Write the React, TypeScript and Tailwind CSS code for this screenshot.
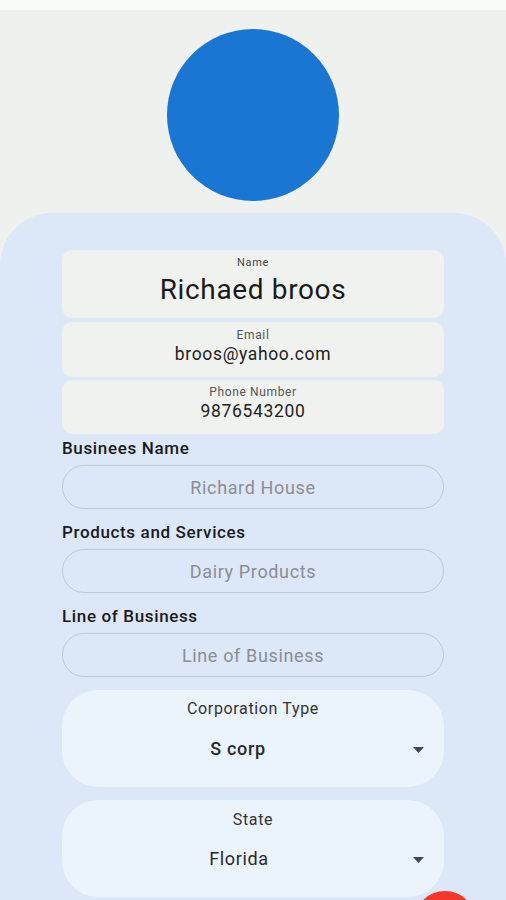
import React from "react";

function Arrow() {
  return (
    <div className="absolute right-[20px] top-[57px]">
      <svg width="11" height="6" viewBox="0 0 11 6">
        <path d="M0 0 L11 0 L5.5 6 Z" fill="#40464c" />
      </svg>
    </div>
  );
}

export default function App() {
  return (
    <div
      className="w-[506px] h-[900px] overflow-hidden bg-[#eff1ef] relative tracking-[0.04em]"
      style={{ fontFamily: "Roboto, 'Noto Sans', sans-serif" }}
    >
      <div className="h-[10px] bg-[#fafafa]" />
      <div className="flex justify-center pt-[19px] pb-[12px]">
        <div className="w-[172px] h-[172px] rounded-full bg-[#1976d2]" />
      </div>
      <div className="bg-[#dce7f7] rounded-t-[52px] pt-[37px] px-[62px] h-[700px]">
        <div className="flex flex-col">
          <div className="h-[68px] rounded-[10px] bg-[#f0f2f0] flex flex-col items-center pt-[6px]">
            <div className="text-[11px] leading-[14px] text-[#444]">Name</div>
            <div className="text-[28px] leading-[34px] text-[#1a1a1a] mt-[3px]">Richaed broos</div>
          </div>
          <div className="h-[55px] mt-[4px] rounded-[10px] bg-[#f0f2f0] flex flex-col items-center pt-[6px]">
            <div className="text-[12px] leading-[15px] text-[#555]">Email</div>
            <div className="text-[17.5px] leading-[22px] text-[#222]">broos@yahoo.com</div>
          </div>
          <div className="h-[54px] mt-[3px] rounded-[10px] bg-[#f0f2f0] flex flex-col items-center pt-[5px]">
            <div className="text-[12px] leading-[15px] text-[#555]">Phone Number</div>
            <div className="text-[17.5px] leading-[22px] text-[#222]">9876543200</div>
          </div>

          <div className="mt-[4px] text-[17px] leading-[20px] font-medium text-[#1a1a1a]">Businees Name</div>
          <div className="mt-[7px] h-[44px] rounded-full border border-[#c3c9d0] flex items-center justify-center text-[18px] text-[#8a8e93]">
            Richard House
          </div>

          <div className="mt-[13px] text-[17px] leading-[20px] font-medium text-[#1a1a1a]">Products and Services</div>
          <div className="mt-[7px] h-[44px] rounded-full border border-[#c3c9d0] flex items-center justify-center text-[18px] text-[#8a8e93]">
            Dairy Products
          </div>

          <div className="mt-[13px] text-[17px] leading-[20px] font-medium text-[#1a1a1a]">Line of Business</div>
          <div className="mt-[7px] h-[44px] rounded-full border border-[#c3c9d0] flex items-center justify-center text-[18px] text-[#8a8e93]">
            Line of Business
          </div>

          <div className="mt-[13px] h-[97px] rounded-[36px] bg-[#ebf3fd] flex flex-col items-center pt-[9px] relative">
            <div className="text-[16px] leading-[20px] text-[#333]">Corporation Type</div>
            <div className="mt-[19px] text-[18px] leading-[22px] font-medium text-[#2a2a2a] -ml-[30px]">S corp</div>
            <Arrow />
          </div>
          <div className="mt-[13px] h-[97px] rounded-[36px] bg-[#ebf3fd] flex flex-col items-center pt-[10px] relative">
            <div className="text-[16px] leading-[20px] text-[#333]">State</div>
            <div className="mt-[18px] text-[18px] leading-[22px] text-[#2a2a2a] -ml-[28px]">Florida</div>
            <Arrow />
          </div>
        </div>
      </div>
      <div className="absolute left-[414px] top-[891px] w-[62px] h-[62px] rounded-full bg-[#f4362b]" />
    </div>
  );
}
